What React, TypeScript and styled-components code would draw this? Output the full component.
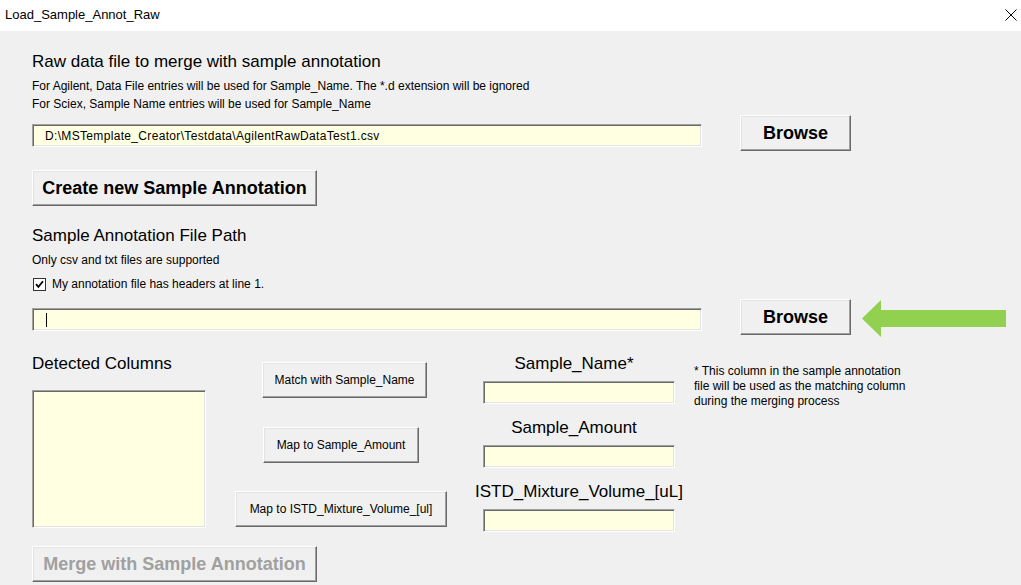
import React from "react";
import styled, { createGlobalStyle } from "styled-components";

const GlobalStyle = createGlobalStyle`
  html, body {
    margin: 0;
    padding: 0;
    background: #f0f0f0;
  }
  body {
    font-family: "Liberation Sans", Arial, sans-serif;
    color: #000;
  }
  * { box-sizing: border-box; }
`;

const Window = styled.div`
  width: 1021px;
  height: 585px;
  overflow: hidden;
  background: #f0f0f0;
  display: flex;
  flex-direction: column;
`;

const TitleBar = styled.div`
  height: 31px;
  flex: none;
  background: #ffffff;
  display: flex;
  align-items: center;
  justify-content: space-between;
  padding: 0 4px 2px 5px;
  font-size: 13px;
`;

const CloseIcon = styled.svg`
  width: 12px;
  height: 12px;
`;

const Body = styled.div`
  padding: 21px 0 0 32px;
  display: flex;
  flex-direction: column;
  align-items: flex-start;
`;

const Heading = styled.div<{ $mt?: number }>`
  font-size: 17px;
  line-height: 20px;
  margin-top: ${(p) => p.$mt ?? 0}px;
  white-space: nowrap;
`;

const Hint = styled.div<{ $mt?: number }>`
  font-size: 12px;
  line-height: 18px;
  margin-top: ${(p) => p.$mt ?? 0}px;
  white-space: nowrap;
`;

const FileRow = styled.div<{ $mt: number }>`
  display: flex;
  align-items: flex-start;
  margin-top: ${(p) => p.$mt}px;
`;

const TextBox = styled.div<{ $w: number; $h?: number; $mt?: number }>`
  width: ${(p) => p.$w}px;
  height: ${(p) => p.$h ?? 23}px;
  margin-top: ${(p) => p.$mt ?? 0}px;
  background: #ffffe1;
  border: 1px solid;
  border-color: #a0a0a0 #ffffff #ffffff #a0a0a0;
  box-shadow: inset 1px 1px 0 #696969, inset -1px -1px 0 #e3e3e3;
  font-size: 12px;
  letter-spacing: 0.33px;
  display: flex;
  align-items: center;
  padding-left: 12px;
  white-space: nowrap;
`;

const Caret = styled.span`
  display: inline-block;
  width: 1px;
  height: 14px;
  background: #000;
  margin-left: 1px;
`;

const Button = styled.button<{
  $w: number;
  $bold?: boolean;
  $ml?: number;
  $mt?: number;
}>`
  width: ${(p) => p.$w}px;
  height: 36px;
  flex: none;
  margin-left: ${(p) => p.$ml ?? 0}px;
  margin-top: ${(p) => p.$mt ?? 0}px;
  padding: 0;
  background: #f0f0f0;
  border: 1px solid;
  border-color: #ffffff #696969 #696969 #ffffff;
  box-shadow: inset -1px -1px 0 #a0a0a0, inset 1px 1px 0 #e3e3e3;
  font-family: "Liberation Sans", Arial, sans-serif;
  font-size: ${(p) => (p.$bold ? 18 : 12)}px;
  font-weight: ${(p) => (p.$bold ? 700 : 400)};
  color: #000;
  white-space: nowrap;
  cursor: default;
  &:disabled {
    color: #a0a0a0;
  }
`;

const Arrow = styled.svg`
  width: 144px;
  height: 37px;
  margin-left: 11px;
  margin-top: 1px;
  flex: none;
`;

const CheckRow = styled.label`
  display: flex;
  align-items: center;
  gap: 6px;
  height: 18px;
  margin-top: 6px;
  padding-left: 1px;
  font-size: 12px;
`;

const CheckBox = styled.span`
  width: 13px;
  height: 13px;
  border: 1px solid #333333;
  background: #ffffff;
  display: flex;
  align-items: center;
  justify-content: center;
`;

const Mapping = styled.div`
  display: flex;
  align-items: flex-start;
  margin-top: 17px;
`;

const LeftCol = styled.div`
  width: 174px;
  display: flex;
  flex-direction: column;
`;

const ButtonCol = styled.div`
  width: 270px;
  padding-top: 8px;
  display: flex;
  flex-direction: column;
  align-items: center;
  gap: 28.5px;
`;

const FieldCol = styled.div`
  width: 192px;
  margin-left: 7px;
  display: flex;
  flex-direction: column;
  gap: 14px;
`;

const Field = styled.div`
  display: flex;
  flex-direction: column;
  align-items: center;
`;

const FieldLabel = styled.div<{ $pr?: number }>`
  font-size: 17px;
  line-height: 20px;
  white-space: nowrap;
  margin-bottom: 7px;
  padding-right: ${(p) => p.$pr ?? 0}px;
`;

const Note = styled.div`
  margin-left: 19px;
  padding-top: 10px;
  font-size: 12px;
  line-height: 15px;
  white-space: nowrap;
`;

export default function App() {
  return (
    <>
      <GlobalStyle />
      <Window>
        <TitleBar>
          <span>Load_Sample_Annot_Raw</span>
          <CloseIcon viewBox="0 0 12 12">
            <path d="M0.5 0.5 L11.5 11.5 M11.5 0.5 L0.5 11.5" stroke="#000" strokeWidth="1" fill="none" />
          </CloseIcon>
        </TitleBar>
        <Body>
          <Heading>Raw data file to merge with sample annotation</Heading>
          <Hint $mt={5}>
            For Agilent, Data File entries will be used for Sample_Name. The *.d extension will be ignored
          </Hint>
          <Hint>For Sciex, Sample Name entries will be used for Sample_Name</Hint>
          <FileRow $mt={2}>
            <TextBox $w={670} $mt={9}>
              D:\MSTemplate_Creator\Testdata\AgilentRawDataTest1.csv
            </TextBox>
            <Button $w={111} $bold $ml={38}>
              Browse
            </Button>
          </FileRow>
          <Button $w={285} $bold $mt={19}>
            Create new Sample Annotation
          </Button>

          <Heading $mt={20}>Sample Annotation File Path</Heading>
          <Hint $mt={5}>Only csv and txt files are supported</Hint>
          <CheckRow>
            <CheckBox>
              <svg width="9" height="9" viewBox="0 0 9 9">
                <path d="M1 4.2 L3.4 6.8 L8 1.2" stroke="#000" strokeWidth="1.8" fill="none" />
              </svg>
            </CheckBox>
            My annotation file has headers at line 1.
          </CheckRow>
          <FileRow $mt={6}>
            <TextBox $w={670} $mt={9}>
              <Caret />
            </TextBox>
            <Button $w={111} $bold $ml={38}>
              Browse
            </Button>
            <Arrow viewBox="0 0 144 37">
              <polygon points="0,18.5 19,0 19,10 144,10 144,27 19,27 19,37" fill="#92d050" />
            </Arrow>
          </FileRow>

          <Mapping>
            <LeftCol>
              <Heading>Detected Columns</Heading>
              <TextBox $w={174} $h={138} $mt={16} />
            </LeftCol>
            <ButtonCol>
              <Button $w={165} $ml={7}>
                Match with Sample_Name
              </Button>
              <Button $w={156}>Map to Sample_Amount</Button>
              <Button $w={212}>Map to ISTD_Mixture_Volume_[ul]</Button>
            </ButtonCol>
            <FieldCol>
              <Field>
                <FieldLabel $pr={10}>Sample_Name*</FieldLabel>
                <TextBox $w={192} />
              </Field>
              <Field>
                <FieldLabel $pr={10}>Sample_Amount</FieldLabel>
                <TextBox $w={192} />
              </Field>
              <Field>
                <FieldLabel>ISTD_Mixture_Volume_[uL]</FieldLabel>
                <TextBox $w={192} />
              </Field>
            </FieldCol>
            <Note>
              * This column in the sample annotation
              <br />
              file will be used as the matching column
              <br />
              during the merging process
            </Note>
          </Mapping>
          <Button $w={285} $bold $mt={14} disabled>
            Merge with Sample Annotation
          </Button>
        </Body>
      </Window>
    </>
  );
}
